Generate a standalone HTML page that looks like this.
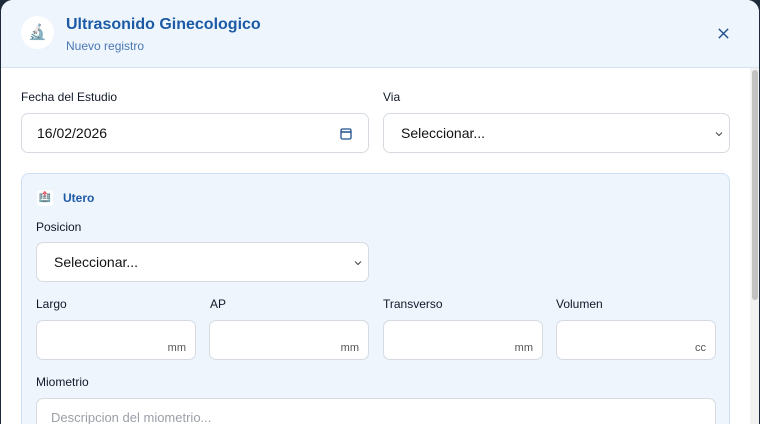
<!DOCTYPE html>
<html><head><style>
*{box-sizing:border-box;margin:0;padding:0}
html,body{width:760px;height:424px;overflow:hidden}
body{background:#1e2a3a;font-family:"Liberation Sans",Arial,sans-serif;position:relative}
.modal{position:absolute;left:1px;top:0;width:758px;height:424px;background:#fff;border-radius:12px 12px 0 0;overflow:hidden}
.hdr{position:absolute;left:0;top:0;width:758px;height:68px;background:#eef5fd;border-bottom:1px solid #d5e3f3}
.ic{position:absolute;left:20px;top:16px;width:33px;height:33px;border-radius:50%;background:#fff;font-size:15px;text-align:center;line-height:33px}
.t1{position:absolute;left:65px;top:16px;font-size:16px;font-weight:bold;color:#1c5aa6}
.t2{position:absolute;left:65px;top:39px;font-size:12px;color:#4a78b5}
.x{position:absolute;left:716px;top:27px}
.lbl{position:absolute;font-size:12px;color:#111827}
.in{position:absolute;background:#fff;border:1px solid #d6dbe2;border-radius:7px;height:40px}
.val{position:absolute;left:15px;top:11px;font-size:14px;color:#111}
.unit{position:absolute;right:9px;bottom:5px;font-size:11px;color:#555}
.panel{position:absolute;left:20px;top:173px;width:709px;height:300px;background:#eef5fd;border:1px solid #cde0f5;border-radius:8px}
.sb{position:absolute;left:749px;top:68px;width:9px;height:360px;background:#f1f1f1}
.th{position:absolute;left:751px;top:70px;width:6px;height:230px;background:#c2c2c2;border-radius:3px}
.chev{position:absolute;right:6px;top:17px}
</style></head><body>
<div class="modal">
<div class="hdr">
<div class="ic">🔬</div>
<div class="t1">Ultrasonido Ginecologico</div>
<div class="t2">Nuevo registro</div>
<svg class="x" width="13" height="13" viewBox="0 0 14 14"><path d="M2 2L12 12M12 2L2 12" stroke="#1c4f8f" stroke-width="1.5"/></svg>
</div>
<div class="lbl" style="left:20px;top:90px">Fecha del Estudio</div>
<div class="lbl" style="left:382px;top:90px">Via</div>
<div class="in" style="left:20px;top:113px;width:348px"><span class="val">16/02/2026</span>
<svg style="position:absolute;right:16px;top:13px" width="12" height="13" viewBox="0 0 12 13"><rect x="1" y="2" width="10" height="10" rx="1.5" fill="none" stroke="#1c4f8f" stroke-width="1.3"/><path d="M1 5h10" stroke="#1c4f8f" stroke-width="1.5"/></svg></div>
<div class="in" style="left:382px;top:113px;width:347px"><span class="val" style="left:17px">Seleccionar...</span><svg class="chev" width="8" height="6" viewBox="0 0 8 6"><path d="M1 1.5L4 4.5L7 1.5" fill="none" stroke="#444" stroke-width="1"/></svg></div>
<div class="panel"></div>
<div style="position:absolute;left:36px;top:190px;width:16px;height:16px;background:#fff;border-radius:3px;font-size:10px;text-align:center;line-height:16px">🏥</div>
<div style="position:absolute;left:62px;top:191px;font-size:12px;font-weight:bold;color:#1c5aa6">Utero</div>
<div class="lbl" style="left:35px;top:220px">Posicion</div>
<div class="in" style="left:35px;top:242px;width:333px"><span class="val" style="left:17px">Seleccionar...</span><svg class="chev" width="8" height="6" viewBox="0 0 8 6"><path d="M1 1.5L4 4.5L7 1.5" fill="none" stroke="#444" stroke-width="1"/></svg></div>
<div class="lbl" style="left:35px;top:297px">Largo</div>
<div class="lbl" style="left:209px;top:297px">AP</div>
<div class="lbl" style="left:382px;top:297px">Transverso</div>
<div class="lbl" style="left:555px;top:297px">Volumen</div>
<div class="in" style="left:35px;top:320px;width:160px"><span class="unit">mm</span></div>
<div class="in" style="left:208px;top:320px;width:160px"><span class="unit">mm</span></div>
<div class="in" style="left:382px;top:320px;width:160px"><span class="unit">mm</span></div>
<div class="in" style="left:555px;top:320px;width:160px"><span class="unit">cc</span></div>
<div class="lbl" style="left:35px;top:375px">Miometrio</div>
<div class="in" style="left:35px;top:398px;width:680px;height:40px"><span style="position:absolute;left:14px;top:11px;font-size:13px;color:#9aa0a8">Descripcion del miometrio...</span></div>
<div class="sb"></div><div class="th"></div>
</div>
</body></html>
